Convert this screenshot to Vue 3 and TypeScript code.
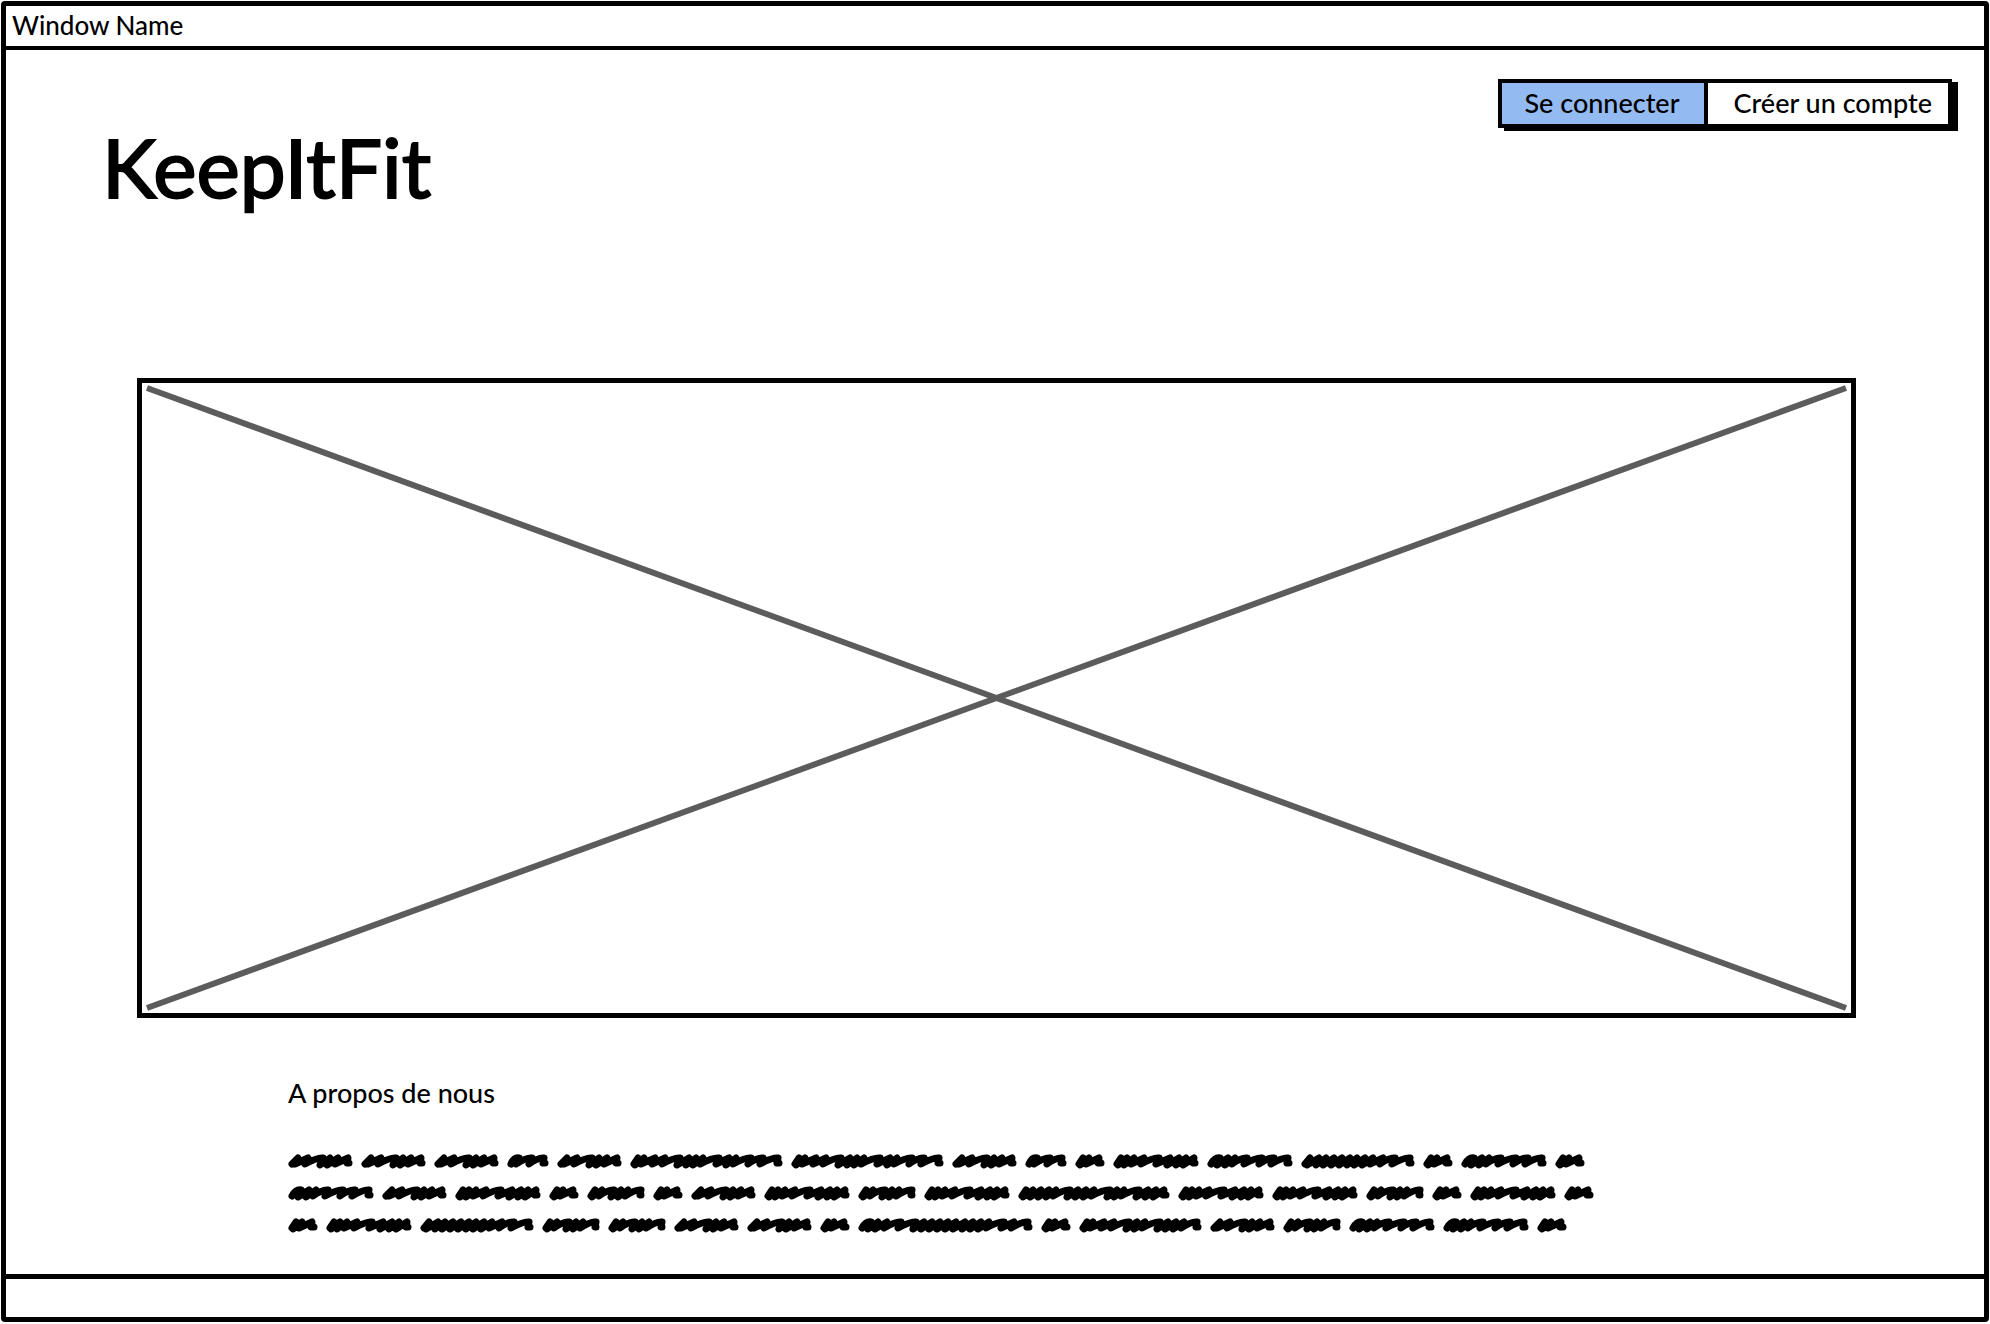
<script setup lang="ts">
type Kind = 'a' | 'b' | 'c' | 'd' | 'e' | 'f' | 'g' | 'h' | 'i' | 'j' | 'k'

interface Scribble {
  width: number
  peaks: number[]
}

const scribbles: Record<Kind, Scribble> = {
  a: { width: 65, peaks: [10, 20, 35, 42, 50, 60] },
  b: { width: 153, peaks: [8, 14, 25, 35, 50, 59, 66, 73, 89, 99, 106, 121, 133, 148] },
  c: { width: 42, peaks: [12, 25, 37] },
  d: { width: 30, peaks: [8, 14, 24] },
  e: { width: 86, peaks: [8, 14, 21, 31, 46, 57, 66, 73, 81] },
  f: { width: 86, peaks: [13, 21, 28, 40, 55, 67, 81] },
  g: { width: 114, peaks: [9, 18, 25, 33, 41, 49, 56, 64, 72, 82, 94, 109] },
  h: { width: 58, peaks: [8, 15, 27, 34, 41, 54] },
  i: { width: 152, peaks: [8, 15, 23, 31, 38, 52, 60, 68, 76, 92, 99, 106, 121, 130, 138, 146] },
  j: { width: 175, peaks: [13, 20, 29, 43, 58, 66, 74, 82, 90, 98, 107, 115, 123, 131, 146, 156, 170] },
  k: { width: 123, peaks: [8, 14, 25, 35, 50, 58, 66, 81, 89, 97, 105, 118] },
}

const words = [...'aaacabbacdefgdfd' + 'faedhdaeheieehded' + 'deghhaadjdkahffd'] as Kind[]

// A zigzag that climbs to every peak and drops back down;
// wide steps get a rounded shoulder, tight ones run together.
function zigzag({ width, peaks }: Scribble): string {
  const steps = peaks.map((x, i) => {
    const last = i === peaks.length - 1
    const gap = x - (peaks[i - 1] ?? 0)
    const next = (peaks[i + 1] ?? width) - x
    const climb = gap >= 12 ? `Q${x - 5} 3 ${x} 4` : `L${x} 4`
    const foot = last ? `${x - 1} 9L${width - 4} 9` : `${x - 3} ${next < 10 ? 11 : 10}`
    return `${climb}L${foot}`
  })
  return `M4 10${steps.join('')}`
}
</script>

<template>
  <div class="window">
    <div class="titlebar">Window Name</div>
    <main class="content">
      <header class="top">
        <h1 class="logo">KeepItFit</h1>
        <nav class="actions" aria-label="Compte">
          <button type="button" class="action selected">Se connecter</button>
          <button type="button" class="action">Créer un compte</button>
        </nav>
      </header>
      <div class="picture">
        <svg viewBox="0 0 100 100" preserveAspectRatio="none" aria-hidden="true">
          <path d="M0 0L100 100M0 100L100 0" />
        </svg>
      </div>
      <section class="about">
        <h2>A propos de nous</h2>
        <div class="lines" aria-hidden="true">
          <svg
            v-for="(kind, i) in words"
            :key="i"
            :width="scribbles[kind].width"
            height="14"
            :viewBox="`0 0 ${scribbles[kind].width} 14`"
          >
            <path :d="zigzag(scribbles[kind])" />
          </svg>
        </div>
      </section>
    </main>
    <footer class="statusbar"></footer>
  </div>
</template>

<style>
body {
  margin: 0;
  background: #fff;
}
</style>

<style scoped>
.window {
  box-sizing: border-box;
  display: flex;
  flex-direction: column;
  min-height: calc(100vh - 3px);
  margin: 1px 1px 0;
  border: 5px solid #000;
  border-radius: 4px;
  color: #000;
  font-family: Lato, "Open Sans", sans-serif;
  font-size: 27px;
  font-weight: 500;
  line-height: 30px;
}

.titlebar {
  padding: 4px 6px 6px;
  border-bottom: 4px solid #000;
  font-size: 26px;
}

.content {
  flex: 1;
}

.top {
  display: flex;
  justify-content: space-between;
  align-items: flex-start;
  padding: 29px 32px 0 96px;
}

.logo {
  margin: 39px 0 0;
  font-size: 82px;
  font-weight: 400;
  line-height: 96px;
  -webkit-text-stroke: 2px #000;
}

.actions {
  display: flex;
  border: 4px solid #000;
  box-shadow: 6px 3px 0 #000;
}

.action {
  padding: 5px 24px 6px 22px;
  border: 0;
  background: #fff;
  color: inherit;
  font: inherit;
}

.action + .action {
  padding: 5px 16px 6px 26px;
  border-left: 4px solid #000;
}

.action.selected {
  background: #94baf2;
}

.picture {
  box-sizing: border-box;
  height: 640px;
  margin: 164px 128px 0 131px;
  padding: 5px;
  border: 5px solid #000;
}

.picture svg {
  display: block;
  width: 100%;
  height: 100%;
  overflow: visible;
}

.picture path {
  fill: none;
  stroke: #5c5c5c;
  stroke-width: 6;
  vector-effect: non-scaling-stroke;
}

.about {
  max-width: 1320px;
  padding: 60px 120px 38px 282px;
}

.about h2 {
  margin: 0;
  font: inherit;
}

.lines {
  display: flex;
  flex-wrap: wrap;
  gap: 18px 8px;
  margin-top: 46px;
}

.lines svg {
  overflow: visible;
}

.lines path {
  fill: none;
  stroke: #000;
  stroke-width: 7;
  stroke-linecap: round;
  stroke-linejoin: round;
}

.statusbar {
  height: 38px;
  border-top: 5px solid #000;
}
</style>
